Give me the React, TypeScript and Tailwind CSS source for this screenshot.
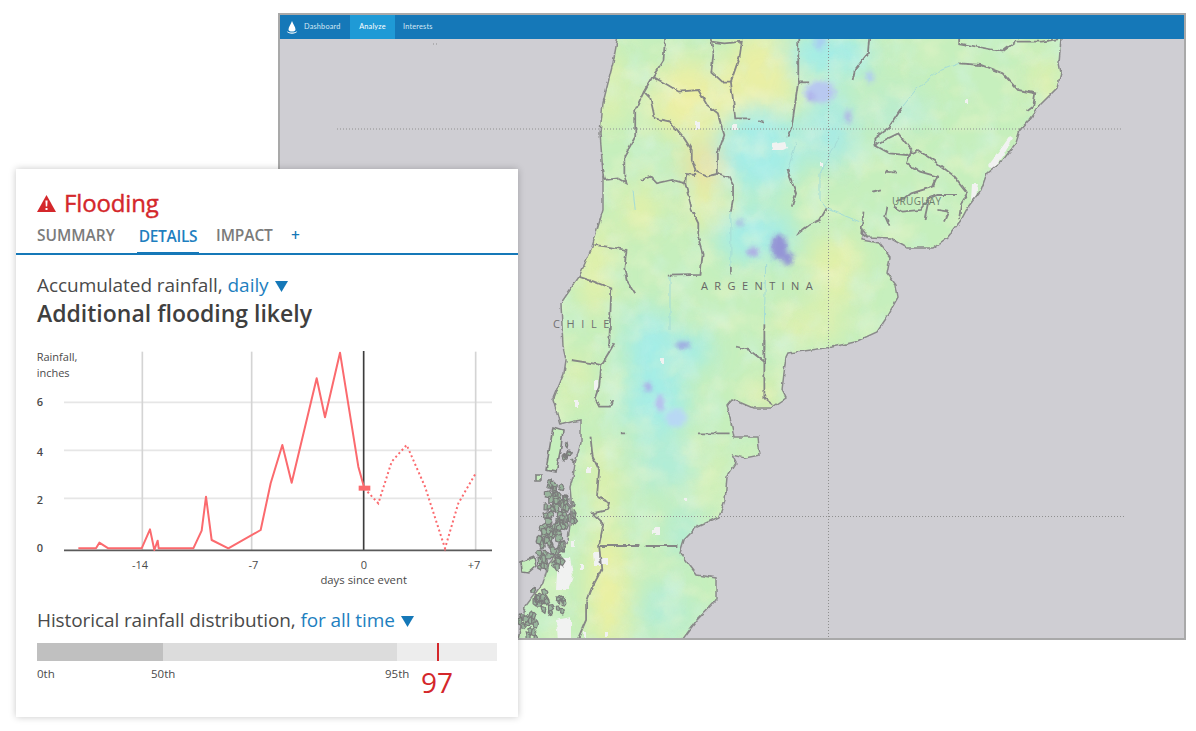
import React from "react";

const LAND =
  "M620 25 L1061 25 L1061 39 L1059 63 L1061 73 L1057 88 L1040 105 L1029 120 L1020 130 L1016 143 L1003 160 L987 173 L981 190 L968 207 L961 220 L948 237 L933 248 L907 248 L890 238 L868 237 L863 230 L861 240 L879 243 L890 257 L887 273 L896 285 L898 297 L885 320 L877 332 L855 342 L832 347 L797 352 L788 353 L786 357 L784 373 L782 390 L786 398 L771 408 L753 408 L732 399 L727 405 L732 427 L734 437 L758 437 L760 455 L745 458 L732 455 L736 463 L727 477 L725 500 L719 517 L697 527 L684 540 L680 553 L697 575 L716 578 L716 600 L697 620 L682 640 L676 655 L510 655 L518 640 L525 607 L543 583 L548 565 L568 540 L572 510 L570 487 L573 477 L575 463 L581 443 L581 420 L571 422 L560 425 L556 410 L553 400 L564 373 L566 360 L563 347 L561 303 L579 277 L592 247 L603 210 L603 173 L600 133 L603 103 L613 63 Z";

// borders traced in the zoomed crop coordinates of the upper and lower map
const UPPER_BORDERS = [
  "M335 0 L330 90 L305 140 L340 165 L365 185 L410 180 L430 225 L455 250 L465 295 L470 315 L455 370 L455 430 L480 440 L490 465 L490 510 L485 545",
  "M305 140 L285 185 L300 205 L310 265 L345 275 L375 320 L395 360 L395 390 L405 425 L430 440 L455 432",
  "M285 185 L265 240 L265 320 L240 380 L240 440 L245 460 L225 445 L195 450 L190 400",
  "M280 450 L300 440 L315 460 L350 450 L380 460 L382 432 L405 435",
  "M380 460 L395 540 L410 580 L410 625 L420 670 L415 735 L340 737",
  "M485 710 L485 730",
  "M435 0 L445 70 L440 125 L465 155 L485 155 L490 210 L495 265 L530 265 M548 270 L560 275",
  "M440 35 L470 40 L510 35 L505 80 L485 155",
  "M640 0 L640 155 L625 290 L615 320",
  "M640 157 L665 157",
  "M765 150 L770 120 L800 70 L805 0",
  "M615 420 L635 490 L625 530",
  "M705 535 L690 570 L665 585 L635 615",
  "M1010 0 L1010 40 L1110 65 L1140 35 L1200 35 L1240 27",
  "M1010 100 L1060 105 L1110 130 L1145 180 L1185 190 L1180 230 L1165 245",
  "M880 230 L850 290 L815 325 L815 345 L850 370 L890 375 L915 360 L960 400 L1000 440 L1030 490 L1015 520 L1010 565",
  "M815 345 L870 310 L900 360 L890 400 L920 425 L960 440 L950 470 L900 490 L890 500 L865 515",
  "M860 530 L880 545 L920 540 L940 505 L960 495 L1005 495",
  "M845 530 L840 560 L850 590 M940 510 L930 570 M960 540 L985 545 L975 575",
  "M790 545 L785 610 L800 625 M810 485 L830 478 M840 425 L865 428",
  "M170 645 L200 650 L245 660 L240 715 L245 750 L265 790",
  "M135 740 L170 755 L210 775 L205 950",
  "M562 880 L562 960",
];

const LOWER_BORDERS = [
  "M140 60 L190 70 L210 75 L205 140 L195 175 L205 200 L230 200 L235 180",
  "M210 75 L240 10",
  "M585 0 L585 175 L605 195",
  "M430 280 L505 280 M255 280 L265 280",
  "M185 290 L190 350 L205 390 L200 470 L230 490 L225 510 L190 520 L215 550 L205 615 L210 690 L190 740 L175 790 L175 840 L145 930",
  "M205 618 L300 618 M312 618 L385 618",
  "M520 20 L550 30 L585 65",
];

const FAINT_RIVERS = [
  "M1010 100 L960 125 L910 180 L880 230",
  "M345 740 L345 900 M485 545 L485 710 M565 700 L562 880",
  "M635 340 L615 420 M735 320 L690 430 L690 510 L705 535 L790 580",
  "M260 480 L265 540",
];

const ISLANDS = [
  "M553 427 L563 430 L561 447 L556 472 L546 470 Z",
  "M536 475 L541 475 L541 480 L536 480 Z",
  "M521 562 L534 557 L536 566 L528 573 L522 572 Z",
];

const WHITE_PATCHES = [
  "M695 122 L700 122 L700 129 L695 129 Z",
  "M733 124 L737 124 L737 131 L733 131 Z",
  "M772 144 L785 142 L787 148 L783 150 L773 150 Z",
  "M1010 136 L1013 138 L1002 158 L992 170 L988 166 L1000 150 Z",
  "M972 184 L978 184 L976 197 L971 200 Z",
  "M965 100 L968 100 L968 104 L965 104 Z",
  "M820 162 L823 162 L823 167 L820 167 Z",
  "M594 380 L598 380 L598 390 L594 390 Z",
  "M586 467 L591 467 L591 473 L586 473 Z",
  "M574 400 L578 400 L578 408 L574 408 Z",
  "M571 541 L575 541 L575 547 L571 547 Z",
  "M652 530 L656 530 L656 534 L652 534 Z",
  "M655 527 L660 527 L660 535 L655 535 Z",
  "M684 497 L687 497 L687 501 L684 501 Z",
  "M558 558 L570 558 L573 575 L568 590 L556 590 Z",
  "M556 620 L571 617 L571 640 L558 640 Z",
  "M593 553 L600 553 L600 558 L608 558 L608 565 L594 565 Z",
  "M580 563 L583 563 L583 570 L580 570 Z",
  "M605 632 L608 632 L608 637 L605 637 Z",
  "M583 632 L586 632 L586 637 L583 637 Z",
  "M660 358 L664 358 L664 364 L660 364 Z",
];

type Blob = [number, number, number, number, string];

const BLOBS: Blob[] = [
  [690, 100, 40, 40, "#f2efa0"],
  [760, 80, 36, 46, "#f0efa0"],
  [705, 165, 20, 22, "#f8dd96"],
  [610, 90, 14, 40, "#e6f0a6"],
  [595, 270, 16, 50, "#e8f0a4"],
  [640, 210, 20, 26, "#e6f0a6"],
  [705, 205, 18, 24, "#eeeea0"],
  [835, 270, 26, 36, "#e6f0a6"],
  [810, 325, 36, 18, "#e2f0aa"],
  [1045, 80, 12, 30, "#e6f0a6"],
  [608, 590, 18, 60, "#f6f09a"],
  [604, 490, 12, 50, "#e6f0a6"],
  [700, 470, 30, 30, "#d6f0b6"],
  [765, 395, 18, 10, "#f0ee9e"],
  [575, 380, 12, 30, "#e4f0a8"],
  [760, 150, 42, 44, "#9eecee"],
  [830, 130, 26, 40, "#a4eaea"],
  [830, 55, 46, 24, "#9eecee"],
  [755, 235, 40, 28, "#9eecee"],
  [650, 345, 26, 38, "#9eecee"],
  [655, 400, 34, 38, "#9eecee"],
  [690, 350, 24, 18, "#9eecee"],
  [665, 465, 34, 26, "#aeecdc"],
  [685, 530, 16, 28, "#aeecdc"],
  [665, 610, 24, 26, "#aeecdc"],
  [895, 110, 34, 24, "#b8ecd0"],
];

const DARK_BLOBS: Blob[] = [
  [779, 247, 8, 13, "#9494d6"],
  [788, 259, 5, 7, "#9494d6"],
  [753, 252, 6, 5, "#aeaee4"],
  [740, 223, 3, 3, "#aeaee4"],
  [820, 92, 16, 11, "#b8c8f0"],
  [811, 97, 4, 4, "#aeaeea"],
  [848, 117, 3, 7, "#b0b0e8"],
  [870, 77, 4, 6, "#b0ccf0"],
  [683, 345, 8, 3, "#9c9ce2"],
  [648, 387, 4, 5, "#acaaea"],
  [660, 403, 4, 9, "#b8bcee"],
  [676, 418, 11, 9, "#b8d8f4"],
  [820, 40, 6, 10, "#a8d0f0"],
];

// fixed pseudo random numbers for the little fjord islands
function rnd(n: number) {
  const v = Math.sin(n * 12.9898) * 43758.5453;
  return v - Math.floor(v);
}

function loops(count: number, seed: number, x0: number, x1: number, y0: number, y1: number, size: number) {
  const out: string[] = [];
  for (let i = 0; i < count; i++) {
    const cx = x0 + rnd(seed + i) * (x1 - x0);
    const cy = y0 + rnd(seed + i + 500) * (y1 - y0);
    const pts: string[] = [];
    for (let k = 0; k < 5; k++) {
      const a = (k / 5) * Math.PI * 2;
      const r = size * (0.5 + rnd(seed + i * 7 + k) * 0.8);
      pts.push(`${(cx + Math.cos(a) * r).toFixed(1)} ${(cy + Math.sin(a) * r * 1.4).toFixed(1)}`);
    }
    out.push(`M${pts.join(" L")} Z`);
  }
  return out;
}

const FJORDS = [
  ...loops(55, 1, 546, 566, 484, 530, 3),
  ...loops(50, 90, 539, 563, 525, 568, 3),
  ...loops(14, 200, 562, 575, 495, 522, 2.4),
  ...loops(16, 300, 530, 552, 590, 612, 2.6),
  ...loops(14, 400, 520, 538, 608, 638, 2.6),
  ...loops(8, 500, 556, 566, 596, 612, 2.2),
  ...loops(9, 600, 560, 574, 440, 462, 1.8),
];

function MapView() {
  return (
    <svg className="block" width="904" height="599" viewBox="280 39 904 599">
      <defs>
        <clipPath id="land">
          <path d={LAND} />
        </clipPath>
        <filter id="wide" filterUnits="userSpaceOnUse" x="280" y="0" width="904" height="700">
          <feGaussianBlur stdDeviation="12" />
        </filter>
        <filter id="tight" filterUnits="userSpaceOnUse" x="280" y="0" width="904" height="700">
          <feGaussianBlur stdDeviation="2.6" />
        </filter>
        <filter id="mottle-yellow" filterUnits="userSpaceOnUse" x="500" y="20" width="600" height="640">
          <feTurbulence type="fractalNoise" baseFrequency="0.035 0.045" numOctaves="3" seed="4" />
          <feColorMatrix type="matrix" values="0 0 0 0 0.96  0 0 0 0 0.94  0 0 0 0 0.62  2.4 0 0 0 -1.05" />
          <feGaussianBlur stdDeviation="1.5" />
        </filter>
        <filter id="mottle-cyan" filterUnits="userSpaceOnUse" x="500" y="20" width="600" height="640">
          <feTurbulence type="fractalNoise" baseFrequency="0.04 0.03" numOctaves="3" seed="11" />
          <feColorMatrix type="matrix" values="0 0 0 0 0.66  0 0 0 0 0.92  0 0 0 0 0.9  2.4 0 0 0 -1.1" />
          <feGaussianBlur stdDeviation="1.5" />
        </filter>
        <filter id="rough" filterUnits="userSpaceOnUse" x="280" y="10" width="904" height="660">
          <feTurbulence type="fractalNoise" baseFrequency="0.14" numOctaves="2" seed="7" result="n" />
          <feDisplacementMap in="SourceGraphic" in2="n" scale="4" xChannelSelector="R" yChannelSelector="G" />
          <feGaussianBlur stdDeviation="0.45" />
        </filter>
      </defs>
      <rect x="280" y="39" width="904" height="599" fill="#cfced3" />
      <g filter="url(#rough)">
        <path d={LAND} fill="#c6efbd" />
        <g clipPath="url(#land)">
          <g filter="url(#wide)" opacity="0.85">
            {BLOBS.map(([cx, cy, rx, ry, fill], i) => (
              <ellipse key={i} cx={cx} cy={cy} rx={rx} ry={ry} fill={fill} />
            ))}
          </g>
          <rect x="500" y="20" width="600" height="640" filter="url(#mottle-yellow)" opacity="0.35" />
          <rect x="500" y="20" width="600" height="640" filter="url(#mottle-cyan)" opacity="0.35" />
          <g filter="url(#tight)">
            {DARK_BLOBS.map(([cx, cy, rx, ry, fill], i) => (
              <ellipse key={i} cx={cx} cy={cy} rx={rx} ry={ry} fill={fill} />
            ))}
          </g>
          {WHITE_PATCHES.map((d, i) => (
            <path key={i} d={d} fill="#f1f2f1" />
          ))}
        </g>
        <g fill="#c6efbd" stroke="#808080" strokeWidth="1.6">
          {ISLANDS.map((d, i) => (
            <path key={i} d={d} />
          ))}
        </g>
        <g fill="#98b49c" stroke="#7c7c7c" strokeWidth="1.2">
          {FJORDS.map((d, i) => (
            <path key={i} d={d} />
          ))}
        </g>
        <path d={LAND} fill="none" stroke="#8a8a8a" strokeWidth="1.5" />
        <g transform="translate(520 30) scale(0.4348 0.3333)" fill="none">
          {FAINT_RIVERS.map((d, i) => (
            <path key={i} d={d} stroke="#a5dcd6" strokeWidth="1" vectorEffect="non-scaling-stroke" />
          ))}
          {UPPER_BORDERS.map((d, i) => (
            <path key={i} d={d} stroke="#868686" strokeWidth="1.8" vectorEffect="non-scaling-stroke" />
          ))}
        </g>
        <g transform="translate(510 340) scale(0.4348 0.3333)" fill="none">
          {LOWER_BORDERS.map((d, i) => (
            <path key={i} d={d} stroke="#868686" strokeWidth="1.8" vectorEffect="non-scaling-stroke" />
          ))}
        </g>
      </g>
      <g stroke="#8f8f8f" strokeWidth="1" strokeDasharray="1 2" fill="none">
        <path d="M337 129 H1122" />
        <path d="M337 516.5 H1124" />
        <path d="M828.5 39 V638" />
        <path d="M433 44 H439" />
      </g>
      <g fill="#666" fontFamily="'Open Sans', sans-serif">
        <text x="701" y="290" fontSize="11" letterSpacing="6.4">ARGENTINA</text>
        <text x="553" y="328" fontSize="11" letterSpacing="6.6" fill="#707070">CHILE</text>
        <text x="892" y="205" fontSize="10" letterSpacing="0.3" fill="#6e7e6e">URUGUAY</text>
      </g>
    </svg>
  );
}

function Caret() {
  return (
    <svg className="inline-block ml-[6px] mb-[1px]" width="13" height="11" viewBox="0 0 13 11">
      <path d="M0 0 H13 L6.5 11 Z" fill="#1578b8" />
    </svg>
  );
}

function RainChart() {
  const solid =
    "175,625 228,625 238,608 265,625 365,625 390,568 403,630 413,602 416,625 520,625 545,572 558,470 575,600 625,625 722,570 752,430 787,315 815,428 890,115 915,232 960,38 1015,380 1033,445";
  const dotted = "1033,445 1075,490 1115,365 1160,315 1215,440 1275,625 1315,490 1367,400";

  return (
    <svg className="block" width="490" height="250" viewBox="0 0 1470 750" fontFamily="'Open Sans', sans-serif">
      <g stroke="#e6e6e6" strokeWidth="5">
        <path d="M132 187 H1416" />
        <path d="M132 331 H1416" />
        <path d="M132 475 H1416" />
      </g>
      <g stroke="#d4d4d4" strokeWidth="5">
        <path d="M367 35 V630" />
        <path d="M695 35 V630" />
        <path d="M1367 35 V630" />
      </g>
      <path d="M1031 33 V630" stroke="#3c3c3c" strokeWidth="5" />
      <path d="M132 631 H1416" stroke="#5a5a5a" strokeWidth="5" />
      <polyline points={solid} fill="none" stroke="#fb6a6e" strokeWidth="6" strokeLinejoin="round" />
      <polyline points={dotted} fill="none" stroke="#fb6a6e" strokeWidth="6" strokeDasharray="6 8" />
      <rect x="1016" y="437" width="35" height="15" fill="#fb6a6e" />
      <g fill="#4a4a4a" fontSize="33">
        <text x="50" y="64">Rainfall,</text>
        <text x="50" y="111">inches</text>
        <text x="50" y="199" fontWeight="600">6</text>
        <text x="50" y="349" fontWeight="600">4</text>
        <text x="50" y="492" fontWeight="600">2</text>
        <text x="50" y="637" fontWeight="600">0</text>
        <text x="360" y="686" textAnchor="middle">-14</text>
        <text x="700" y="686" textAnchor="middle">-7</text>
        <text x="1032" y="686" textAnchor="middle">0</text>
        <text x="1362" y="686" textAnchor="middle">+7</text>
        <text x="1031" y="732" textAnchor="middle" fontSize="34">days since event</text>
      </g>
    </svg>
  );
}

function FloodCard() {
  return (
    <div className="absolute left-[16px] top-[169px] w-[502px] h-[548px] bg-white shadow-[0_0_7px_rgba(0,0,0,0.22)] font-['Open_Sans',sans-serif] text-[#4a4a4a]">
      <div className="flex items-center gap-[8px] pl-[21px] pt-[18px] h-[50px]">
        <svg width="19" height="19" viewBox="0 0 19 19">
          <path d="M9.5 1 L19 18 H0 Z" fill="#d4272b" />
          <path d="M8.4 6.5 H10.6 L10.2 12.5 H8.8 Z M8.5 14 H10.5 V16 H8.5 Z" fill="#fff" />
        </svg>
        <span className="text-[24px] leading-none text-[#d4272b] tracking-[-0.15px] [-webkit-text-stroke:0.4px_#d4272b]">Flooding</span>
      </div>
      <div className="flex items-end h-[36px] pl-[21px] border-b-2 border-[#1578b8] text-[15.5px] font-semibold leading-none">
        <span className="pb-[10px] text-[#7b7b7b] w-[100px]">SUMMARY</span>
        <span className="pb-[8px] text-[#1e7fc0] w-[62px] text-center border-b-[3px] border-[#1578b8] tracking-[-0.3px] -mb-[2px]">DETAILS</span>
        <span className="pb-[10px] ml-[17px] text-[#7b7b7b] w-[75px] tracking-[-0.1px]">IMPACT</span>
        <span className="pb-[10px] text-[#1578b8]">+</span>
      </div>
      <div className="pl-[21px] pt-[17px] text-[19px] leading-[26px] tracking-[-0.05px]">
        Accumulated rainfall, <span className="text-[#1e7fc0]">daily</span>
        <Caret />
      </div>
      <div className="pl-[21px] text-[23px] leading-[30px] font-semibold text-[#3f3f3f]">
        Additional flooding likely
      </div>
      <div className="pl-[4px] pt-[12px]">
        <RainChart />
      </div>
      <div className="pl-[21px] mt-[17px] text-[19px] leading-[26px] tracking-[-0.1px]">
        Historical rainfall distribution, <span className="text-[#1e7fc0]">for all time</span>
        <Caret />
      </div>
      <div className="relative flex mt-[10px] ml-[21px] w-[460px] h-[18px]">
        <div className="w-[126px] bg-[#c0c0c0]" />
        <div className="w-[234px] bg-[#dcdcdc]" />
        <div className="flex-1 bg-[#ededed]" />
        <div className="absolute left-[400px] top-0 w-[2px] h-[18px] bg-[#d4272b]" />
      </div>
      <div className="relative ml-[21px] h-[40px] text-[11.5px] leading-none text-[#4a4a4a]">
        <span className="absolute left-0 top-[7px]">0th</span>
        <span className="absolute left-[114px] top-[7px]">50th</span>
        <span className="absolute left-[348px] top-[7px]">95th</span>
        <span className="absolute left-[384px] top-[7px] text-[28px] leading-none text-[#d4272b]">97</span>
      </div>
    </div>
  );
}

export default function App() {
  return (
    <div className="relative w-[1196px] h-[731px] bg-white overflow-hidden">
      <div className="pt-[13px] pl-[278px]">
        <div className="w-[908px] border-2 border-[#a9a9a9]">
          <nav className="flex items-stretch h-[24px] pt-[1px] bg-[#1578b8] text-[7.3px] text-[#d6e9f5] font-['Lato',sans-serif] tracking-[0.2px]">
            <div className="flex items-center w-[70px]">
              <svg className="ml-[6px] mr-[6px]" width="12" height="14" viewBox="0 0 12 14">
                <path d="M6 0 C7 3 9.5 6 9.5 8.5 C9.5 10 8 10.5 6 10.5 C4 10.5 2.5 10 2.5 8.5 C2.5 6 5 3 6 0 Z" fill="#fff" />
                <path d="M0.8 10 C3 12 9 12 11.2 10 C10.5 13.6 1.5 13.6 0.8 10 Z" fill="#fff" />
              </svg>
              <span>Dashboard</span>
            </div>
            <div className="flex items-center justify-center w-[45px] -mt-[1px] pt-[1px] bg-[#1f9ad6] text-white">Analyze</div>
            <div className="flex items-center pl-[8px]">Interests</div>
          </nav>
          <MapView />
        </div>
      </div>
      <FloodCard />
    </div>
  );
}
